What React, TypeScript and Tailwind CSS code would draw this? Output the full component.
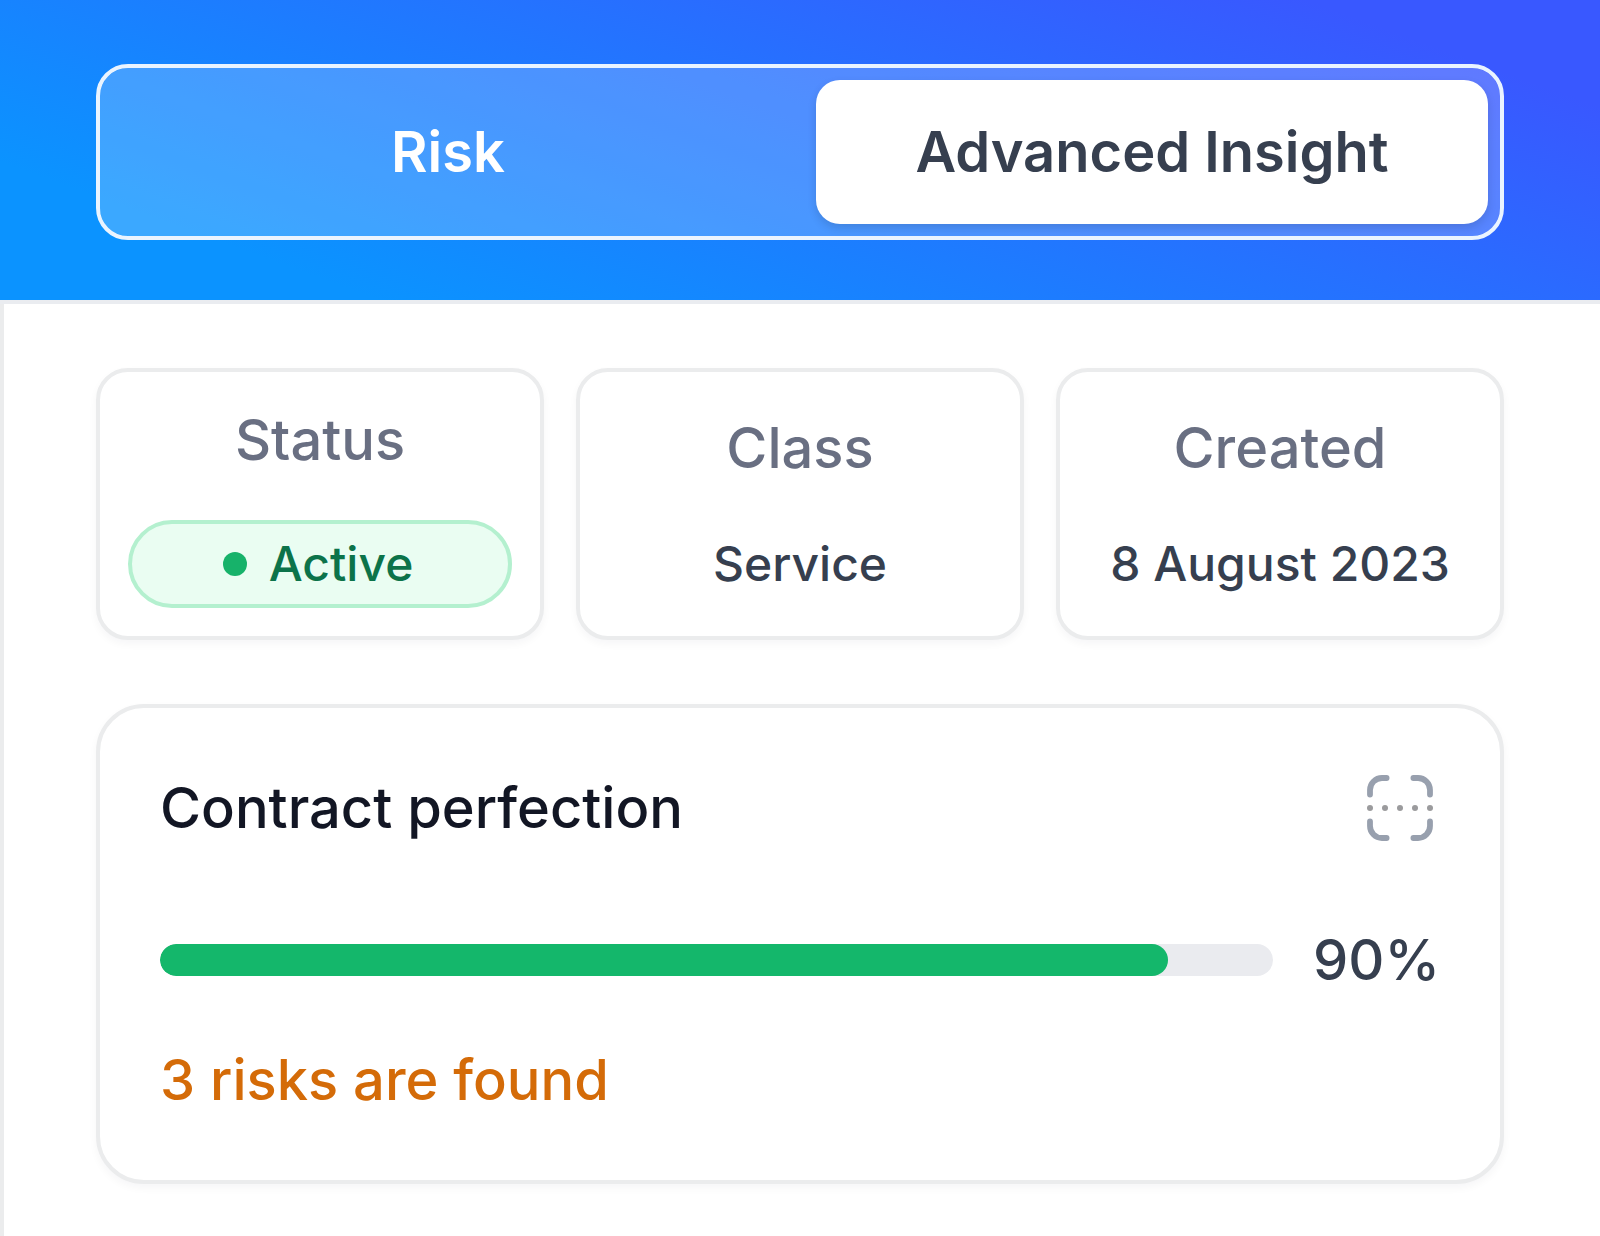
import { useState, type ReactNode } from "react";

const TABS = ["Risk", "Advanced Insight"];

function ScanIcon() {
  return (
    <svg viewBox="0 0 80 80" className="size-20" fill="none" aria-hidden="true">
      <g stroke="#98a0ae" strokeWidth="5.8" strokeLinecap="round">
        <path d="M26.6 10H22C15.4 10 10 15.4 10 22v4.6" />
        <path d="M53.4 10H58c6.6 0 12 5.4 12 12v4.6" />
        <path d="M26.6 70H22c-6.6 0-12-5.4-12-12v-4.6" />
        <path d="M53.4 70H58c6.6 0 12-5.4 12-12v-4.6" />
      </g>
      <g fill="#9b9b9d">
        {[10, 25, 40, 55, 70].map((x) => (
          <circle key={x} cx={x} cy="40" r="3" />
        ))}
      </g>
    </svg>
  );
}

function InfoCard({ label, children }: { label: string; children: ReactNode }) {
  return (
    <div className="flex flex-col items-center justify-center gap-10 rounded-[32px] border-4 border-[#ebeced] bg-white p-7 shadow-[0_4px_8px_rgba(16,24,40,0.04)]">
      <dt className="text-[56px] leading-20 text-[#696f82]">{label}</dt>
      <dd className="w-full text-center text-5xl leading-18 text-[#363f4f]">
        {children}
      </dd>
    </div>
  );
}

function PerfectionCard({ value, risks }: { value: number; risks: number }) {
  return (
    <section className="rounded-[48px] border-4 border-[#ebeced] bg-white p-15 text-[56px] leading-20 shadow-[0_4px_8px_rgba(16,24,40,0.04)]">
      <div className="flex items-center justify-between">
        <h2 className="text-[#121624]">Contract perfection</h2>
        <ScanIcon />
      </div>
      <div className="mt-18 flex items-center gap-10">
        <div
          role="progressbar"
          aria-label="Contract perfection"
          aria-valuenow={value}
          className="h-8 flex-1 overflow-hidden rounded-full bg-[#eaebef]"
        >
          <div
            className="h-full rounded-full bg-[#14b76b]"
            style={{ width: `${value}%` }}
          />
        </div>
        <p className="text-[#363f4f]">{Math.floor(value)}%</p>
      </div>
      <p className="mt-10 text-[#d46b08]">{risks} risks are found</p>
    </section>
  );
}

export default function App() {
  const [active, setActive] = useState("Advanced Insight");

  return (
    <div className="min-h-screen bg-white font-[Inter,sans-serif] font-medium">
      <header className="border-b-4 border-[#eaecf0] bg-[linear-gradient(20deg,#0b93ff_16%,#3958ff_88%)] bg-origin-border px-24 pt-16 pb-15">
        <div className="grid grid-cols-2 gap-8 rounded-[32px] border-4 border-[#eaf4ff] bg-white/20 bg-clip-padding p-3">
          {TABS.map((tab) => (
            <button
              key={tab}
              type="button"
              onClick={() => setActive(tab)}
              className={`rounded-3xl py-8 text-[56px] leading-20 font-semibold ${
                active === tab
                  ? "bg-white text-[#363f4f] shadow-[0_4px_8px_rgba(16,24,40,0.15)]"
                  : "text-white"
              }`}
            >
              {tab}
            </button>
          ))}
        </div>
      </header>
      <main className="min-h-[calc(100vh-304px)] border-l-4 border-[#ebeced] pt-16 pr-24 pb-13 pl-23">
        <dl className="grid grid-cols-3 gap-8">
          <InfoCard label="Status">
            <span className="flex items-center justify-center gap-[22px] rounded-full border-4 border-[#b4f0cf] bg-[#eafdf2] py-1 pr-8 pl-7 text-[#0c734a]">
              <span className="size-6 rounded-full bg-[#17b26a]" />
              Active
            </span>
          </InfoCard>
          <InfoCard label="Class">Service</InfoCard>
          <InfoCard label="Created">
            <span className="whitespace-nowrap">8 August 2023</span>
          </InfoCard>
        </dl>
        <div className="mt-16">
          <PerfectionCard value={90.6} risks={3} />
        </div>
      </main>
    </div>
  );
}
